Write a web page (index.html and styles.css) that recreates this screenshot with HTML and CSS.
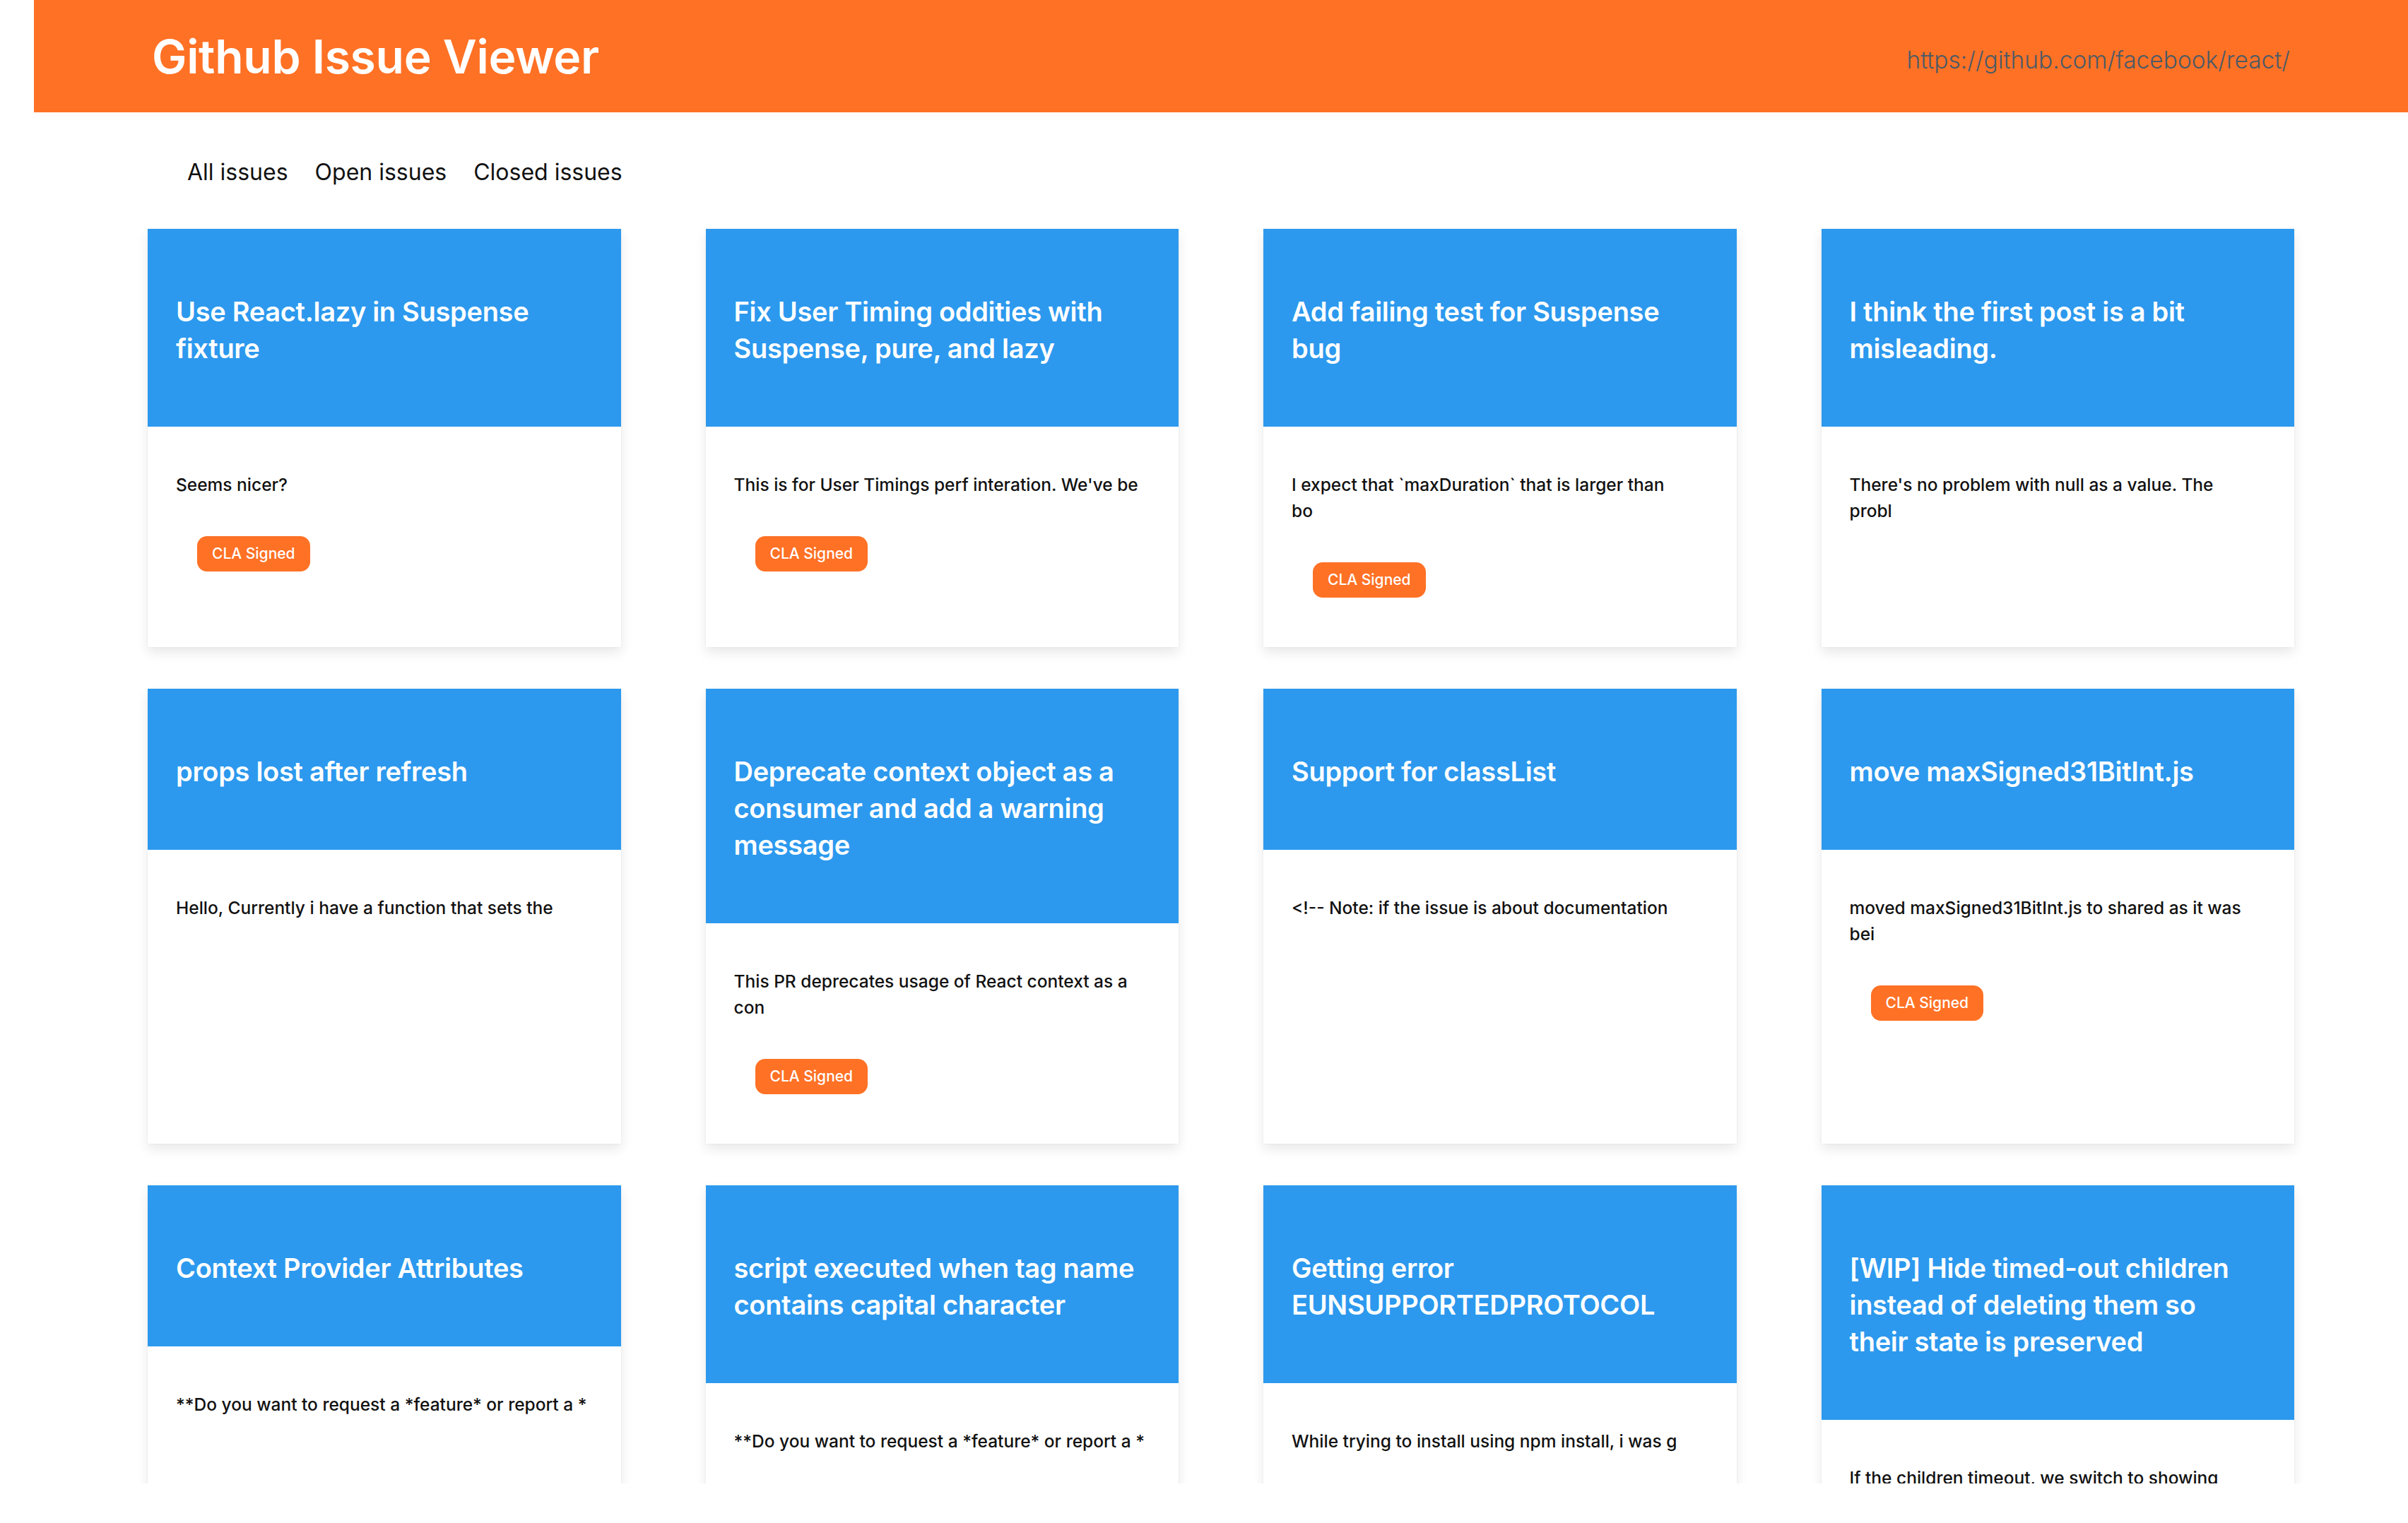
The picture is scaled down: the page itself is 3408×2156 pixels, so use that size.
FILE: index.html
```html
<!DOCTYPE html>
<html lang="en">
<head>
<meta charset="utf-8">
<title>Github Issue Viewer</title>
<link rel="stylesheet" href="styles.css">
</head>
<body>
<div class="app">
  <header class="topbar">
    <h1 class="brand">Github Issue Viewer</h1>
    <span class="repo">https://github.com/facebook/react/</span>
  </header>
  <nav class="filters">
    <a class="filter" href="#">All issues</a>
    <a class="filter" href="#">Open issues</a>
    <a class="filter" href="#">Closed issues</a>
  </nav>
  <main class="grid">
    <article class="card">
      <h2 class="card-title">Use React.lazy in Suspense fixture</h2>
      <div class="card-body">
        <p>Seems nicer?</p>
        <div class="labels"><span class="label">CLA Signed</span></div>
      </div>
    </article>
    <article class="card">
      <h2 class="card-title">Fix User Timing oddities with Suspense, pure, and lazy</h2>
      <div class="card-body">
        <p>This is for User Timings perf interation. We've be</p>
        <div class="labels"><span class="label">CLA Signed</span></div>
      </div>
    </article>
    <article class="card">
      <h2 class="card-title">Add failing test for Suspense<br>bug</h2>
      <div class="card-body">
        <p>I expect that `maxDuration` that is larger than<br>bo</p>
        <div class="labels"><span class="label">CLA Signed</span></div>
      </div>
    </article>
    <article class="card">
      <h2 class="card-title">I think the first post is a bit misleading.</h2>
      <div class="card-body">
        <p>There's no problem with null as a value. The<br>probl</p>
      </div>
    </article>

    <article class="card">
      <h2 class="card-title">props lost after refresh</h2>
      <div class="card-body">
        <p>Hello, Currently i have a function that sets the</p>
      </div>
    </article>
    <article class="card">
      <h2 class="card-title">Deprecate context object as a consumer and add a warning message</h2>
      <div class="card-body">
        <p>This PR deprecates usage of React context as a<br>con</p>
        <div class="labels"><span class="label">CLA Signed</span></div>
      </div>
    </article>
    <article class="card">
      <h2 class="card-title">Support for classList</h2>
      <div class="card-body">
        <p>&lt;!-- Note: if the issue is about documentation</p>
      </div>
    </article>
    <article class="card">
      <h2 class="card-title">move maxSigned31BitInt.js</h2>
      <div class="card-body">
        <p>moved maxSigned31BitInt.js to shared as it was<br>bei</p>
        <div class="labels"><span class="label">CLA Signed</span></div>
      </div>
    </article>

    <article class="card">
      <h2 class="card-title">Context Provider Attributes</h2>
      <div class="card-body">
        <p>**Do you want to request a *feature* or report a *</p>
      </div>
    </article>
    <article class="card">
      <h2 class="card-title">script executed when tag name contains capital character</h2>
      <div class="card-body">
        <p>**Do you want to request a *feature* or report a *</p>
      </div>
    </article>
    <article class="card">
      <h2 class="card-title">Getting error EUNSUPPORTEDPROTOCOL</h2>
      <div class="card-body">
        <p>While trying to install using npm install, i was g</p>
      </div>
    </article>
    <article class="card">
      <h2 class="card-title">[WIP] Hide timed-out children instead of deleting them so<br>their state is preserved</h2>
      <div class="card-body">
        <p>If the children timeout, we switch to showing<br>the</p>
      </div>
    </article>
  </main>
</div>
</body>
</html>
```

FILE: styles.css
```css
* {
  box-sizing: border-box;
}

html, body {
  margin: 0;
  padding: 0;
  background: #ffffff;
}

body {
  font-family: Inter, "Open Sans", "Liberation Sans", sans-serif;
  color: #111111;
}

.app {
  margin-left: 48px;
  height: 2100px;
  overflow: hidden;
  background: #ffffff;
}

.topbar {
  height: 159px;
  background: #ff7125;
  display: flex;
  align-items: center;
  justify-content: space-between;
  padding: 0 167px;
}

.brand {
  margin: 0;
  color: #ffffff;
  font-size: 66px;
  font-weight: 600;
  letter-spacing: -0.3px;
}

.repo {
  color: #4b5b66;
  font-size: 33.5px;
  font-weight: 300;
  padding-top: 10px;
}

.filters {
  height: 165px;
  display: flex;
  align-items: center;
  gap: 38px;
  padding-left: 217px;
  padding-top: 4px;
}

.filter {
  color: #111111;
  text-decoration: none;
  font-size: 32px;
  font-weight: 400;
}

.grid {
  display: grid;
  grid-template-columns: repeat(4, 1fr);
  column-gap: 120px;
  row-gap: 59px;
  padding: 0 161px;
}

.card {
  background: #ffffff;
  box-shadow: 0 8px 16px rgba(0, 0, 0, 0.09), 0 0 3px rgba(0, 0, 0, 0.05);
}

.card-title {
  margin: 0;
  background: #2c99ee;
  color: #ffffff;
  padding: 91px 40px 85px;
  font-size: 38px;
  line-height: 52px;
  font-weight: 600;
  letter-spacing: -0.3px;
}

.card-body {
  padding: 40px;
}

.card-body p {
  margin: 24px 0;
  font-size: 24.5px;
  line-height: 37px;
  font-weight: 500;
  color: #111111;
}

.labels {
  display: flex;
  flex-wrap: wrap;
}

.label {
  display: inline-block;
  margin: 30px;
  padding: 13px 21px;
  background: #ff7125;
  color: #ffffff;
  border-radius: 14px;
  font-size: 21px;
  line-height: 24px;
  font-weight: 500;
}
```
